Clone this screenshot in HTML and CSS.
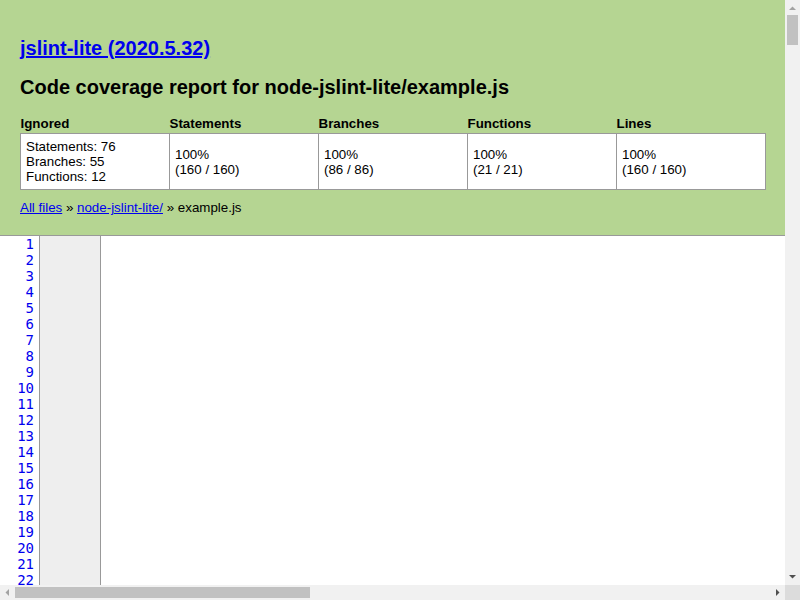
FILE: index.html
```html
<!DOCTYPE html>
<html>
<head>
<meta charset="utf-8">
<title>Code coverage report for node-jslint-lite/example.js</title>
<link rel="stylesheet" href="styles.css">
</head>
<body>
<div class="window">
  <div class="viewport">
    <div class="header">
      <h1><a href="#">jslint-lite (2020.5.32)</a></h1>
      <h2>Code coverage report for node-jslint-lite/example.js</h2>
      <table class="summary">
        <thead>
          <tr><th>Ignored</th><th>Statements</th><th>Branches</th><th>Functions</th><th>Lines</th></tr>
        </thead>
        <tbody>
          <tr>
            <td class="ignored">Statements: 76<br>Branches: 55<br>Functions: 12</td>
            <td>100%<br>(160 / 160)</td>
            <td>100%<br>(86 / 86)</td>
            <td>100%<br>(21 / 21)</td>
            <td>100%<br>(160 / 160)</td>
          </tr>
        </tbody>
      </table>
      <div class="crumbs"><a href="#">All files</a> » <a href="#">node-jslint-lite/</a> » example.js</div>
    </div>
    <div class="code">
      <pre class="lineno"><a href="#">1</a>
<a href="#">2</a>
<a href="#">3</a>
<a href="#">4</a>
<a href="#">5</a>
<a href="#">6</a>
<a href="#">7</a>
<a href="#">8</a>
<a href="#">9</a>
<a href="#">10</a>
<a href="#">11</a>
<a href="#">12</a>
<a href="#">13</a>
<a href="#">14</a>
<a href="#">15</a>
<a href="#">16</a>
<a href="#">17</a>
<a href="#">18</a>
<a href="#">19</a>
<a href="#">20</a>
<a href="#">21</a>
<a href="#">22</a></pre>
      <pre class="hits"></pre>
      <pre class="source"></pre>
    </div>
  </div>
  <div class="vscroll">
    <svg class="arrow" width="15" height="15" viewBox="0 0 15 15"><path d="M4 10h7L7.5 6.5z" fill="#a3a3a3"/></svg>
    <div class="vthumb-track"><div class="vthumb"></div></div>
    <svg class="arrow" width="15" height="15" viewBox="0 0 15 15"><path d="M4 5h7L7.5 8.5z" fill="#505050"/></svg>
  </div>
  <div class="hscroll">
    <svg class="arrow" width="15" height="15" viewBox="0 0 15 15"><path d="M9 4v7L5.5 7.5z" fill="#a3a3a3"/></svg>
    <div class="hthumb-track"><div class="hthumb"></div></div>
    <svg class="arrow" width="15" height="15" viewBox="0 0 15 15"><path d="M6 4v7L9.5 7.5z" fill="#505050"/></svg>
  </div>
  <div class="corner"></div>
</div>
</body>
</html>
```
FILE: styles.css
```css
html, body {
  margin: 0;
  padding: 0;
  overflow: hidden;
}
body {
  font-family: "Liberation Sans", Arial, sans-serif;
  font-size: 10pt;
  color: #000;
}
a {
  color: #0000ee;
}
.window {
  display: grid;
  grid-template-columns: 785px 15px;
  grid-template-rows: 585px 15px;
  width: 800px;
  height: 600px;
}
.viewport {
  overflow: hidden;
  background: #fff;
}
.header {
  background: #b5d592;
  padding: 16px 20px 19px;
  border-bottom: 1px solid #999;
}
h1 {
  font-size: 20px;
  margin: 20px 0 0;
  line-height: 24px;
}
h2 {
  font-size: 20px;
  margin: 15px 0 0;
  line-height: 24px;
}
.summary {
  border-collapse: collapse;
  margin-top: 16px;
  width: 746px;
  table-layout: fixed;
}
.summary th {
  text-align: left;
  font-size: 10pt;
  font-weight: bold;
  padding: 0;
  height: 18px;
  vertical-align: top;
  line-height: 18px;
}
.summary td {
  background: #fff;
  border: 1px solid #999;
  padding: 0 5px;
  vertical-align: middle;
  line-height: 15px;
  height: 55px;
}
.summary td.ignored {
  vertical-align: top;
  padding-top: 5px;
  height: 50px;
}
.crumbs {
  margin-top: 10px;
  line-height: 16px;
}
.code {
  display: flex;
  height: 400px;
}
.code pre {
  margin: 0;
  font-family: "DejaVu Sans Mono", monospace;
  font-size: 14px;
  line-height: 16px;
}
.lineno {
  width: 34px;
  padding-right: 5px;
  text-align: right;
  border-right: 1px solid #999;
}
.lineno a {
  text-decoration: none;
}
.hits {
  width: 60px;
  background: #eee;
  border-right: 1px solid #999;
}
.source {
  flex: 1;
}
.vscroll {
  background: #f1f1f1;
  display: flex;
  flex-direction: column;
}
.hscroll {
  background: #f1f1f1;
  display: flex;
}
.arrow {
  display: block;
  flex: none;
}
.vthumb-track {
  flex: 1;
  padding: 0 2px;
}
.vthumb {
  height: 30px;
  background: #c1c1c1;
}
.hthumb-track {
  flex: 1;
  padding: 2px 0;
}
.hthumb {
  width: 295px;
  height: 11px;
  background: #c1c1c1;
}
.corner {
  background: #dcdcdc;
}
```
